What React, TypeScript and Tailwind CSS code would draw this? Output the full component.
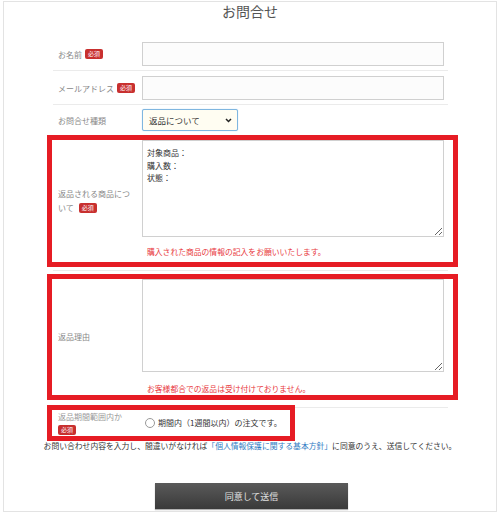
import React from "react";

function Badge() {
  return (
    <span className="inline-flex items-center justify-center w-[18px] h-[10px] rounded-[2px] bg-[#c8302f] text-white text-[6px] leading-none shrink-0">
      必須
    </span>
  );
}

export default function App() {
  return (
    <div
      className="w-[500px] h-[513px] bg-white pt-px px-[3px] overflow-hidden"
      style={{ fontFamily: '"Noto Sans CJK JP", "Noto Sans", sans-serif' }}
    >
      <div className="h-[511px] border border-[#e3e3e3]">
        <h1 className="text-center text-[14px] leading-[18px] text-[#555] font-normal">お問合せ</h1>

        <div className="ml-[43px] w-[411px] mt-[17px]">
          {/* name */}
          <div className="ml-[6px] w-[395px] pl-[5px] flex items-center pt-[5px] pb-[4px] border-b border-[#ebebeb]">
            <div className="w-[84px] pr-[6px] text-[8px] leading-[13px] text-[#888] flex items-center gap-[3px]">
              <span>お名前</span>
              <Badge />
            </div>
            <input className="w-[302px] h-[24px] border border-[#d0d0d0] bg-[#fcfcfc] outline-none" />
          </div>

          {/* mail */}
          <div className="ml-[6px] w-[395px] pl-[5px] flex items-center pt-[5px] pb-[4px] border-b border-[#ebebeb]">
            <div className="w-[84px] pr-[2px] text-[8px] leading-[13px] text-[#888] flex items-center gap-[3px] whitespace-nowrap">
              <span>メールアドレス</span>
              <Badge />
            </div>
            <input className="w-[302px] h-[24px] border border-[#d0d0d0] bg-[#fcfcfc] outline-none" />
          </div>

          {/* type */}
          <div className="ml-[6px] w-[395px] pl-[5px] flex items-center pt-[4px] pb-[4px]">
            <div className="w-[84px] pr-[6px] text-[8px] leading-[13px] text-[#888]">お問合せ種類</div>
            <div className="w-[96px] h-[22px] border border-[#7fb6e0] rounded-[2px] bg-[#fffdf2] flex items-center justify-between pl-[6px] pr-[5px] shadow-[0_0_1px_#9cc8ea]">
              <span className="text-[8.5px] text-[#333] leading-none">返品について</span>
              <svg width="7" height="5" viewBox="0 0 7 5" fill="none">
                <path d="M1 1l2.5 2.5L6 1" stroke="#222" strokeWidth="1.5" />
              </svg>
            </div>
          </div>

          {/* box 1 */}
          <div className="h-[132px] border-[5px] border-[#e61c24] pl-[6px] flex">
            <div className="w-[84px] pr-[6px] text-[8px] leading-[14px] text-[#888] flex flex-col justify-center">
              <div className="whitespace-nowrap">返品される商品につ</div>
              <div className="flex items-center gap-[5px] h-[14px]">
                <span>いて</span>
                <Badge />
              </div>
            </div>
            <div className="w-[302px]">
              <textarea
                className="block w-[302px] h-[97px] border border-[#d0d0d0] bg-white pl-[4px] pt-[6px] text-[8px] leading-[12.5px] text-[#333] outline-none resize-y"
                defaultValue={"対象商品：\n購入数：\n状態："}
              />
              <div className="mt-[9px] pl-[5px] text-[7.8px] leading-[12px] text-[#e8383d]">
                購入された商品の情報の記入をお願いいたします。
              </div>
            </div>
          </div>

          <div className="mt-[3px] ml-[6px] w-[395px] h-px bg-[#ebebeb]" />

          {/* box 2 */}
          <div className="mt-[3px] h-[126px] border-[5px] border-[#e61c24] pl-[6px] flex">
            <div className="w-[84px] pr-[6px] text-[8px] leading-[14px] text-[#888] flex items-center">
              返品理由
            </div>
            <div className="w-[302px]">
              <textarea className="block w-[302px] h-[93px] border border-[#d0d0d0] bg-white outline-none resize-y" />
              <div className="mt-[11px] pl-[5px] text-[7.8px] leading-[12px] text-[#e8383d]">
                お客様都合での返品は受け付けておりません。
              </div>
            </div>
          </div>

          {/* box 3 */}
          <div className="mt-[5px] flex">
            <div className="w-[248px] h-[36px] border-[5px] border-[#e61c24] pl-[6px] flex">
              <div className="w-[84px] pr-[6px] text-[8px] leading-[13px] text-[#999]">
                <div className="whitespace-nowrap">返品期間範囲内か</div>
                <div className="h-[13px] flex items-center">
                  <Badge />
                </div>
              </div>
              <div className="flex items-center gap-[3px] pl-[3px]">
                <span className="w-[10px] h-[10px] rounded-full border border-[#999] bg-white" />
                <span className="text-[8px] leading-none text-[#333] whitespace-nowrap">期間内（1週間以内）の注文です。</span>
              </div>
            </div>
            <div className="w-[153px] mt-[2px] h-px bg-[#ebebeb]" />
          </div>
        </div>

        <p className="text-center text-[7.8px] leading-[10px] text-[#333] whitespace-nowrap">
          お問い合わせ内容を入力し、間違いがなければ
          <span className="text-[#2f7cc4]">「個人情報保護に関する基本方針」</span>
          に同意のうえ、送信してください。
        </p>

        <button className="mt-[32px] ml-[151px] w-[193px] h-[26px] bg-gradient-to-b from-[#5a5a5a] to-[#3a3a3a] text-[#e0e0e0] text-[9px] leading-none shadow-[0_1px_1px_rgba(0,0,0,0.3)]">
          同意して送信
        </button>
      </div>
    </div>
  );
}
